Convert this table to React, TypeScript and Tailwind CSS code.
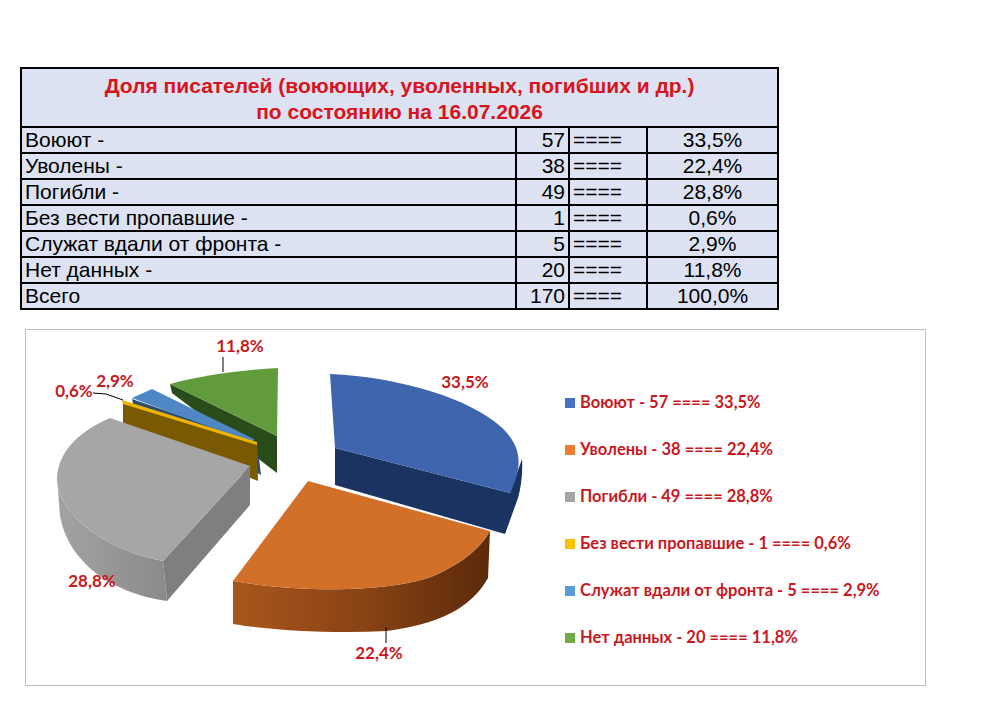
const rows = [
  { label: "Воюют -", n: 57, pct: "33,5%" },
  { label: "Уволены -", n: 38, pct: "22,4%" },
  { label: "Погибли -", n: 49, pct: "28,8%" },
  { label: "Без вести пропавшие -", n: 1, pct: "0,6%" },
  { label: "Служат вдали от фронта -", n: 5, pct: "2,9%" },
  { label: "Нет данных -", n: 20, pct: "11,8%" },
  { label: "Всего", n: 170, pct: "100,0%" },
];

const legend = [
  { color: "bg-[#4472c4]", text: "Воюют - 57 ==== 33,5%" },
  { color: "bg-[#ed7d31]", text: "Уволены - 38 ==== 22,4%" },
  { color: "bg-[#a5a5a5]", text: "Погибли - 49 ==== 28,8%" },
  { color: "bg-[#ffc000]", text: "Без вести пропавшие - 1 ==== 0,6%" },
  { color: "bg-[#5b9bd5]", text: "Служат вдали от фронта - 5 ==== 2,9%" },
  { color: "bg-[#70ad47]", text: "Нет данных - 20 ==== 11,8%" },
];

function Pie() {
  const label = { fontFamily: "Lato, 'Open Sans', sans-serif", fontWeight: 700, fontSize: 17, fill: "#c8181e" };
  return (
    <svg width="520" height="355" viewBox="26 329 520 355" className="shrink-0">
      <defs>
        <linearGradient id="og" x1="0" x2="1" y1="0" y2="0">
          <stop offset="0" stopColor="#a9561c" />
          <stop offset="0.5" stopColor="#8a4314" />
          <stop offset="1" stopColor="#5b2a0b" />
        </linearGradient>
        <linearGradient id="gg" x1="0" x2="1" y1="0" y2="0">
          <stop offset="0" stopColor="#a3a3a3" />
          <stop offset="1" stopColor="#8a8a8a" />
        </linearGradient>
      </defs>

      {/* green 11,8% */}
      <path d="M170,383 L277,435 L277,472 L172,392 Z" fill="#284d1b" />
      <path d="M170,383 C200,375 240,369 278,367 L277,435 Z" fill="#629b3c" />

      {/* light blue 2,9% */}
      <path d="M132,398 L257,441 L261,474 L133,403 Z" fill="#2e4f6e" />
      <path d="M132,397 L152,388 L254,438 L253,442 Z" fill="#4f86c4" />

      {/* gold 0,6% */}
      <path d="M123,402 L257,443 L258,480 L123,423 Z" fill="#7a5a00" />
      <path d="M122,399 L257,441 L257,444 L123,403 Z" fill="#f0b400" />

      {/* grey 28,8% */}
      <path d="M57,477 C57,510 100,548 163,560 L167,600 C110,592 68,560 60,515 Z" fill="url(#gg)" />
      <path d="M250,465 L163,560 L167,600 L250,504 Z" fill="#7f7f7f" />
      <path d="M250,465 L110,417 C80,430 58,450 57,477 C57,510 100,548 163,560 Z" fill="#a6a6a6" />

      {/* blue 33,5% */}
      <path d="M335,447 L510,492 L522,458 C523,472 521,486 518,497 L505,533 L335,484 Z" fill="#1b3360" />
      <path d="M330,373 C400,376 470,398 500,425 C518,441 526,460 510,492 L335,447 Z" fill="#3e65ad" />

      {/* orange 22,4% */}
      <path d="M233,580 C300,592 400,592 440,572 C465,560 482,545 490,530 L488,577 C475,600 450,622 387,630 C330,633 270,629 233,623 Z" fill="url(#og)" />
      <path d="M308,480 L490,530 C482,545 465,560 440,572 C400,592 300,592 233,580 Z" fill="#d2702a" />

      {/* leader lines */}
      <path d="M223,356 L223,371" stroke="#000" strokeWidth="1" fill="none" />
      <path d="M93,392 L106,393 L123,399" stroke="#000" strokeWidth="1" fill="none" />
      <path d="M386,626 L386,642" stroke="#000" strokeWidth="1" fill="none" />

      <text x="240" y="351" textAnchor="middle" style={label}>11,8%</text>
      <text x="115" y="386" textAnchor="middle" style={label}>2,9%</text>
      <text x="74" y="396" textAnchor="middle" style={label}>0,6%</text>
      <text x="465" y="387" textAnchor="middle" style={label}>33,5%</text>
      <text x="379" y="658" textAnchor="middle" style={label}>22,4%</text>
      <text x="92" y="586" textAnchor="middle" style={label}>28,8%</text>
    </svg>
  );
}

export default function App() {
  return (
    <div className="w-[983px] h-[705px] bg-white pt-[67px] pl-[20px] font-['Liberation_Sans',Arial,sans-serif]">
      <table className="table-fixed border-collapse w-[757px] bg-[#dce2f2] text-black">
        <colgroup>
          <col className="w-[495px]" />
          <col className="w-[53px]" />
          <col className="w-[78px]" />
          <col className="w-[131px]" />
        </colgroup>
        <thead>
          <tr>
            <th colSpan={4} className="border-2 border-black h-[59px] p-0 pt-[2px] text-center text-[21px] leading-[26px] font-bold text-[#d8141c]">
              Доля писателей (воюющих, уволенных, погибших и др.)
              <br />
              по состоянию на 16.07.2026
            </th>
          </tr>
        </thead>
        <tbody>
          {rows.map((r) => (
            <tr key={r.label} className="h-[26px] text-[21px] leading-[22px]">
              <td className="border-2 border-black p-0 pl-[3px] whitespace-nowrap">{r.label}</td>
              <td className="border-2 border-black p-0 pr-[3px] text-right">{r.n}</td>
              <td className="border-2 border-black p-0 pl-[3px]">====</td>
              <td className="border-2 border-black p-0 text-center">{r.pct}</td>
            </tr>
          ))}
        </tbody>
      </table>

      <div className="ml-[5px] mt-[19px] w-[901px] h-[357px] border border-[#bfbfbf] bg-white flex">
        <Pie />
        <div className="flex flex-col pl-[19px] pt-[49px] font-['Lato','Open_Sans',sans-serif] font-bold text-[16.5px] text-[#c8181e]">
          {legend.map((l) => (
            <div key={l.text} className="h-[47px] flex items-center gap-[5px] whitespace-nowrap">
              <span className={`w-[10px] h-[10px] ${l.color}`} />
              <span>{l.text}</span>
            </div>
          ))}
        </div>
      </div>
    </div>
  );
}
